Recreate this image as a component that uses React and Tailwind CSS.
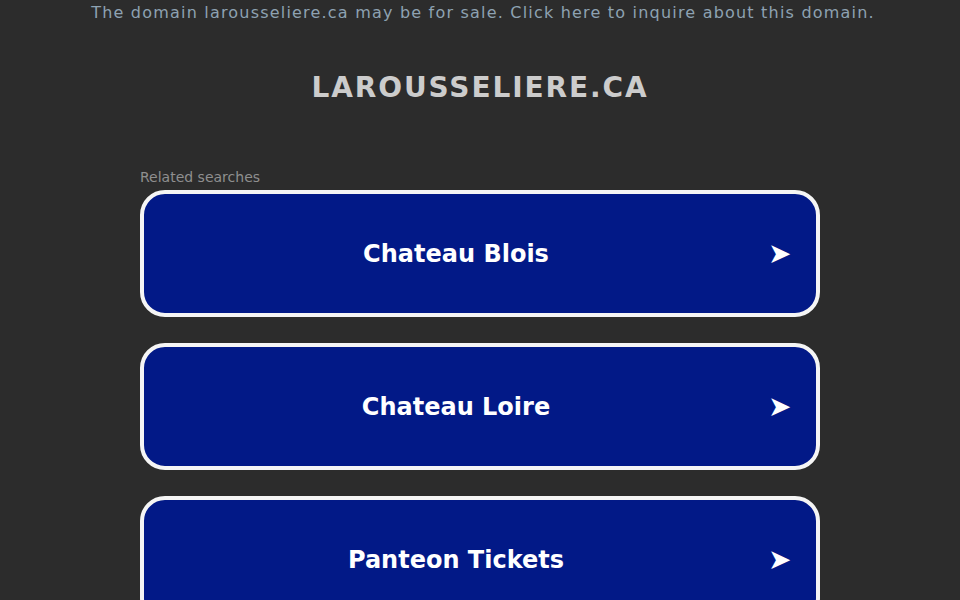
import React from 'react'

const searches = ['Chateau Blois', 'Chateau Loire', 'Panteon Tickets']

export default function App() {
  return (
    <div className="min-h-screen bg-[#2c2c2c] font-['DejaVu_Sans',sans-serif] overflow-hidden h-[600px]">
      <p className="pt-[1px] pl-[6px] text-center text-[16px] leading-[24px] tracking-[1.2px] text-[#8ea2b2]">
        The domain larousseliere.ca may be for sale. Click here to inquire about this domain.
      </p>

      <h1 className="mt-[45px] text-center text-[28px] leading-[36px] font-bold tracking-[1.9px] text-[#cccccc]">
        LAROUSSELIERE.CA
      </h1>

      <div className="mx-auto mt-[62px] w-[680px]">
        <p className="text-[14px] leading-[18px] text-[#8f8f8f] mb-[4px]">Related searches</p>
        <div className="flex flex-col gap-[26px]">
          {searches.map((s) => (
            <div
              key={s}
              className="flex h-[127px] items-center rounded-[25px] border-4 border-[#f5f5f5] bg-[#021987] pl-[20px] pr-[26px]"
            >
              <span className="flex-1 pt-[1px] text-center text-[24px] font-bold text-white">{s}</span>
              <span className="ml-[20px] w-[22px] text-center text-[28px] leading-none text-white">➤</span>
            </div>
          ))}
        </div>
      </div>
    </div>
  )
}
